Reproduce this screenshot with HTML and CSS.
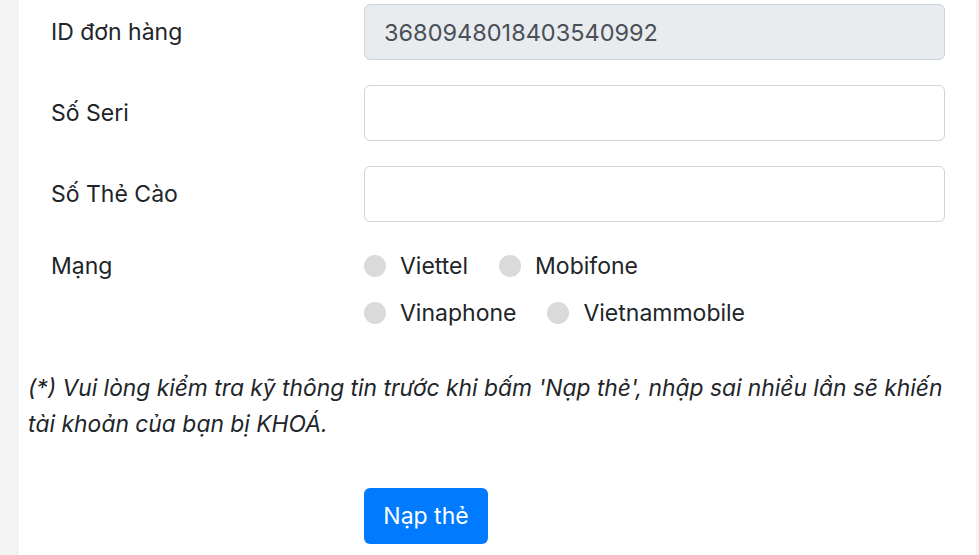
FILE: index.html
```html
<!DOCTYPE html>
<html lang="vi">
<head>
<meta charset="utf-8">
<link rel="stylesheet" href="styles.css">
</head>
<body>
<div class="card">
  <div class="form-row">
    <label class="col-label">ID đơn hàng</label>
    <input class="form-control" type="text" value="3680948018403540992" disabled>
  </div>
  <div class="form-row">
    <label class="col-label">Số Seri</label>
    <input class="form-control" type="text">
  </div>
  <div class="form-row">
    <label class="col-label">Số Thẻ Cào</label>
    <input class="form-control" type="text">
  </div>
  <div class="form-row radio-row">
    <label class="col-label radio-label">Mạng</label>
    <div class="radios">
      <div class="radio-line">
        <span class="radio"><span class="dot"></span>Viettel</span>
        <span class="radio"><span class="dot"></span>Mobifone</span>
      </div>
      <div class="radio-line">
        <span class="radio"><span class="dot"></span>Vinaphone</span>
        <span class="radio"><span class="dot"></span>Vietnammobile</span>
      </div>
    </div>
  </div>
  <p class="note">(*) Vui lòng kiểm tra kỹ thông tin trước khi bấm 'Nạp thẻ', nhập sai nhiều lần sẽ khiến tài khoản của bạn bị KHOÁ.</p>
  <div class="form-row">
    <span></span>
    <div><button class="btn" type="button">Nạp thẻ</button></div>
  </div>
</div>
</body>
</html>
```
FILE: styles.css
```css
* { box-sizing: border-box; }
html, body { margin: 0; padding: 0; }
body {
  background: #f4f4f4;
  font-family: Inter, "Noto Sans", sans-serif;
  color: #212529;
  width: 979px;
  height: 555px;
  overflow: hidden;
}
.card {
  margin-left: 19px;
  width: 957px;
  height: 555px;
  background: #fff;
  padding-top: 4px;
}
.form-row {
  display: grid;
  grid-template-columns: 313px 581px;
  padding-left: 32px;
  margin-bottom: 25px;
  align-items: center;
}
.col-label {
  font-size: 23px;
  line-height: 36px;
}
.form-control {
  display: block;
  width: 581px;
  height: 56px;
  border: 1px solid #ced4da;
  border-radius: 6px;
  padding: 0 19px;
  font-family: inherit;
  font-size: 23.5px;
  color: #495057;
  background: #fff;
}
.form-control:disabled {
  background: #e9ecef;
  opacity: 1;
  -webkit-text-fill-color: #495057;
}
.radio-row {
  align-items: start;
  margin-top: 32px;
  margin-bottom: 0;
}
.radio-label {
  line-height: 24px;
  margin-top: 0;
}
.radios {
  display: flex;
  flex-direction: column;
  gap: 23px;
}
.radio-line {
  display: flex;
  height: 24px;
  align-items: center;
}
.radio {
  display: inline-flex;
  align-items: center;
  font-size: 23px;
  margin-right: 31px;
}
.dot {
  width: 22px;
  height: 22px;
  border-radius: 50%;
  background: #dadada;
  margin-right: 14px;
  flex: none;
}
.note {
  margin: 45px 0 0 9px;
  width: 930px;
  font-size: 22.8px;
  font-style: italic;
  line-height: 36px;
  color: #212529;
}
.note + .form-row { margin-top: 46px; }
.btn {
  width: 124px;
  height: 56px;
  background: #007bff;
  color: #fff;
  border: none;
  border-radius: 6px;
  font-family: inherit;
  font-size: 23px;
  padding: 0;
}
```
